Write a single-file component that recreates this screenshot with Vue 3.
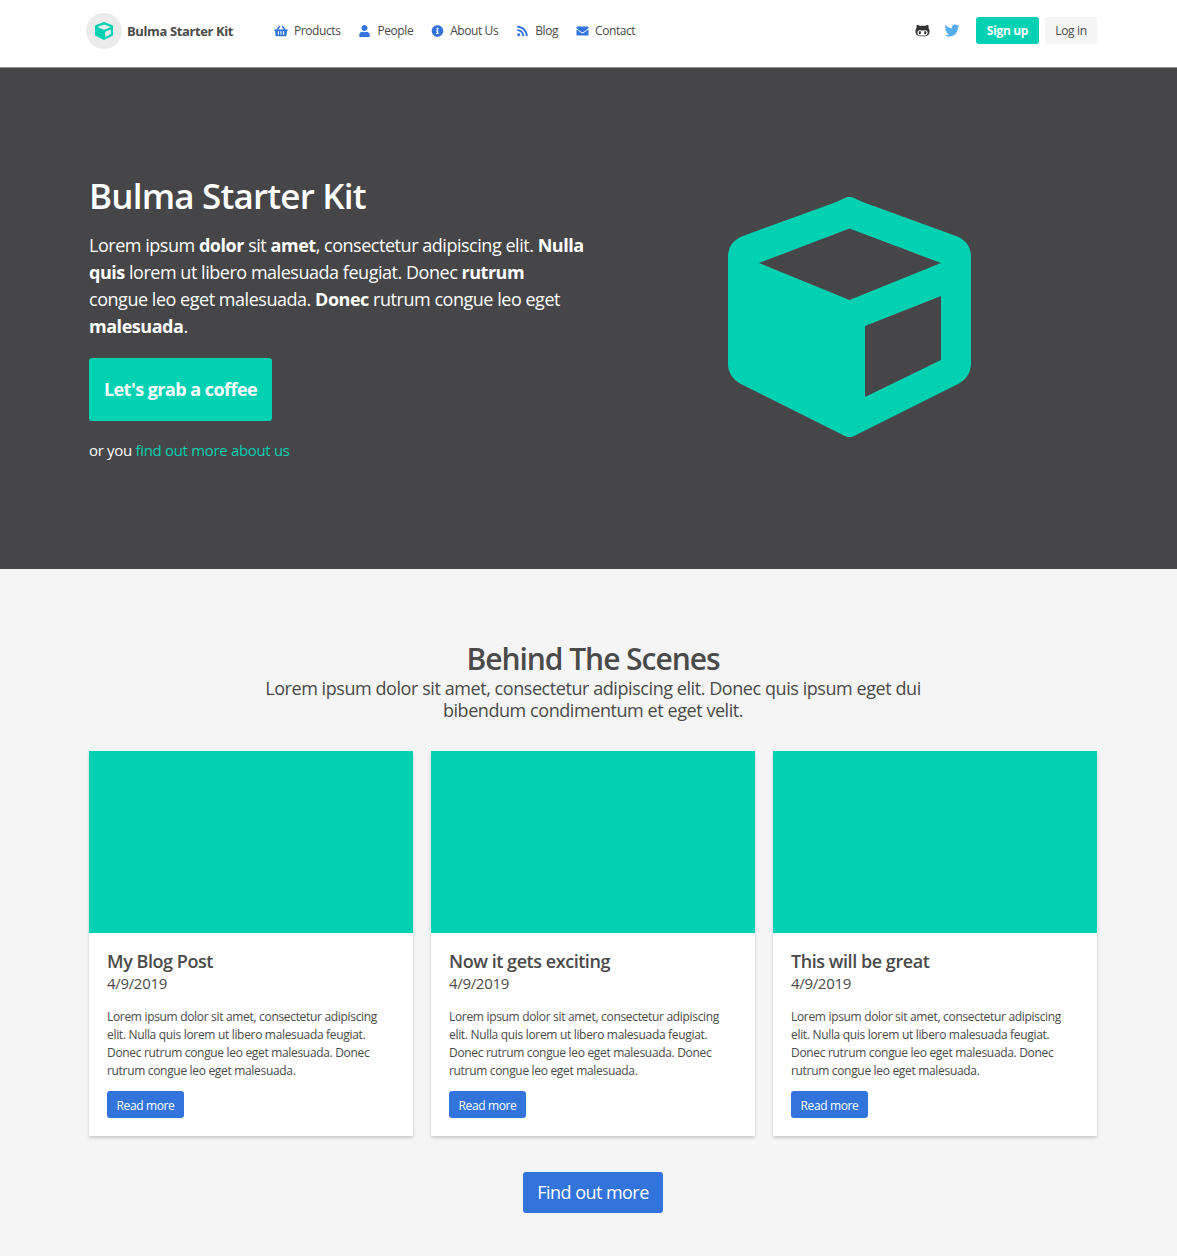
<template>
  <div class="page">
    <nav class="navbar">
      <a class="brand">
        <span class="brand-badge">
          <svg class="brand-cube" viewBox="0 0 243 240"><path fill-rule="evenodd" :d="cubePath" /></svg>
        </span>
        <span class="brand-name">Bulma Starter Kit</span>
      </a>
      <div class="nav-links">
        <a v-for="l in links" :key="l.label" class="nav-link">
          <svg class="nav-icon" :viewBox="l.box"><path :d="l.d" /></svg>
          <span>{{ l.label }}</span>
        </a>
      </div>
      <div class="nav-end">
        <svg class="social github" viewBox="0 0 480 512"><path :d="icons.github" /></svg>
        <svg class="social twitter" viewBox="0 0 512 512"><path :d="icons.twitter" /></svg>
        <a class="btn-signup">Sign up</a>
        <a class="btn-login">Log in</a>
      </div>
    </nav>

    <section class="hero">
      <div class="hero-text">
        <h1>Bulma Starter Kit</h1>
        <p class="hero-copy">
          Lorem ipsum <strong>dolor</strong> sit <strong>amet</strong>, consectetur adipiscing elit.
          <strong>Nulla quis</strong> lorem ut libero malesuada feugiat. Donec <strong>rutrum</strong>
          congue leo eget malesuada. <strong>Donec</strong> rutrum congue leo eget
          <strong>malesuada</strong>.
        </p>
        <a class="btn-coffee">Let's grab a coffee</a>
        <p class="hero-more">or you <a>find out more about us</a></p>
      </div>
      <div class="hero-art">
        <svg class="hero-cube" viewBox="0 0 243 240"><path fill-rule="evenodd" :d="cubePath" /></svg>
      </div>
    </section>

    <section class="scenes">
      <h2>Behind The Scenes</h2>
      <p class="scenes-sub">
        Lorem ipsum dolor sit amet, consectetur adipiscing elit. Donec quis ipsum eget dui bibendum condimentum et eget velit.
      </p>
      <div class="cards">
        <article v-for="p in posts" :key="p" class="card">
          <div class="card-image"></div>
          <div class="card-body">
            <h3>{{ p }}</h3>
            <div class="card-date">4/9/2019</div>
            <p class="card-text">
              Lorem ipsum dolor sit amet, consectetur adipiscing elit. Nulla quis lorem ut libero malesuada feugiat. Donec rutrum congue leo eget malesuada. Donec rutrum congue leo eget malesuada.
            </p>
            <a class="btn-read">Read more</a>
          </div>
        </article>
      </div>
      <div class="more-row">
        <a class="btn-more">Find out more</a>
      </div>
    </section>
  </div>
</template>

<script setup>
const cubePath =
  'M107 5.5C115 2 118 0 121.5 0S128 2 136 5.5L228 39Q243 45 243 60V166Q243 180 230 187L135 234.5C128 238 125 240 121.5 240S115 238 108 234.5L13 187Q0 180 0 166V60Q0 45 15 39Z' +
  'M31 66L121.5 103L213 66L121.5 31.5Z' +
  'M137 129V200L213 163V99Z'

const icons = {
  basket: 'M576 216v16c0 13.255-10.745 24-24 24h-8l-26.113 182.788C514.509 462.435 494.257 480 470.37 480H105.63c-23.887 0-44.139-17.565-47.518-41.212L32 256h-8c-13.255 0-24-10.745-24-24v-16c0-13.255 10.745-24 24-24h67.341l106.78-146.821c10.395-14.292 30.407-17.453 44.701-7.058 14.293 10.395 17.453 30.408 7.058 44.701L170.477 192h235.046L326.12 82.821c-10.395-14.292-7.234-34.306 7.059-44.701 14.291-10.395 34.306-7.235 44.701 7.058L484.659 192H552c13.255 0 24 10.745 24 24zM312 392V280c0-13.255-10.745-24-24-24s-24 10.745-24 24v112c0 13.255 10.745 24 24 24s24-10.745 24-24zm112 0V280c0-13.255-10.745-24-24-24s-24 10.745-24 24v112c0 13.255 10.745 24 24 24s24-10.745 24-24zm-224 0V280c0-13.255-10.745-24-24-24s-24 10.745-24 24v112c0 13.255 10.745 24 24 24s24-10.745 24-24z',
  user: 'M224 256c70.7 0 128-57.3 128-128S294.7 0 224 0 96 57.3 96 128s57.3 128 128 128zm89.6 32h-16.7c-22.2 10.2-46.9 16-72.9 16s-50.6-5.8-72.9-16h-16.7C60.2 288 0 348.2 0 422.4V464c0 26.5 21.5 48 48 48h352c26.5 0 48-21.5 48-48v-41.6c0-74.2-60.2-134.4-134.4-134.4z',
  info: 'M256 8C119.043 8 8 119.083 8 256c0 136.997 111.043 248 248 248s248-111.003 248-248C504 119.083 392.957 8 256 8zm0 110c23.196 0 42 18.804 42 42s-18.804 42-42 42-42-18.804-42-42 18.804-42 42-42zm56 254c0 6.627-5.373 12-12 12h-88c-6.627 0-12-5.373-12-12v-24c0-6.627 5.373-12 12-12h12v-64h-12c-6.627 0-12-5.373-12-12v-24c0-6.627 5.373-12 12-12h64c6.627 0 12 5.373 12 12v100h12c6.627 0 12 5.373 12 12v24z',
  rss: 'M128.081 415.959c0 35.369-28.672 64.041-64.041 64.041S0 451.328 0 415.959s28.672-64.041 64.041-64.041 64.04 28.673 64.04 64.041zm175.66 47.25c-8.354-154.6-132.185-278.587-286.95-286.95C7.656 175.765 0 183.105 0 192.253v48.069c0 8.415 6.49 15.472 14.887 16.018 111.832 7.284 201.473 96.702 208.772 208.772.547 8.397 7.604 14.887 16.018 14.887h48.069c9.149.001 16.489-7.655 15.995-16.79zm144.249.288C439.596 229.677 251.465 40.445 16.503 32.01 7.473 31.686 0 38.981 0 48.016v48.068c0 8.625 6.835 15.645 15.453 15.999 191.179 7.839 344.627 161.316 352.465 352.465.353 8.618 7.373 15.453 15.999 15.453h48.068c9.034-.001 16.329-7.474 16.005-16.504z',
  envelope: 'M502.3 190.8c3.9-3.1 9.7-.2 9.7 4.7V400c0 26.5-21.5 48-48 48H48c-26.5 0-48-21.5-48-48V195.6c0-5 5.7-7.8 9.7-4.7 22.4 17.4 52.1 39.5 154.1 113.6 21.1 15.4 56.7 47.8 92.2 47.6 35.7.3 72-32.8 92.3-47.6 102-74.1 131.6-96.3 154-113.7zM256 320c23.2.4 56.6-29.2 73.4-41.4 132.7-96.3 142.8-104.7 173.4-128.7 5.8-4.5 9.2-11.5 9.2-18.9v-19c0-26.5-21.5-48-48-48H48C21.5 64 0 85.5 0 112v19c0 7.4 3.4 14.3 9.2 18.9 30.6 23.9 40.7 32.4 173.4 128.7 16.8 12.2 50.2 41.8 73.4 41.4z',
  github: 'M186.1 328.7c0 20.9-10.9 55.1-36.7 55.1s-36.7-34.2-36.7-55.1 10.9-55.1 36.7-55.1 36.7 34.2 36.7 55.1zM480 278.2c0 31.9-3.2 65.7-17.5 95-37.9 76.6-142.1 74.8-216.7 74.8-75.8 0-186.2 2.7-225.6-74.8-14.6-29-20.2-63.1-20.2-95 0-41.9 13.9-81.5 41.5-113.6-5.2-15.8-7.7-32.4-7.7-48.8 0-21.5 4.9-32.3 14.6-51.8 45.3 0 74.3 9 108.8 36 29-6.9 58.8-10 88.7-10 27 0 54.2 2.9 80.4 9.2 34-26.7 63-35.2 107.8-35.2 9.8 19.5 14.6 30.3 14.6 51.8 0 16.4-2.6 32.7-7.7 48.2 27.5 32.4 39 72.3 39 114.2zm-64.3 50.5c0-43.9-26.7-82.6-73.5-82.6-18.9 0-37 3.4-56 6-14.9 2.3-29.8 3.2-45.1 3.2-15.2 0-30.1-.9-45.1-3.2-18.7-2.6-37-6-56-6-46.8 0-73.5 38.7-73.5 82.6 0 87.8 80.4 101.3 150.4 101.3h48.2c70.3 0 150.6-13.4 150.6-101.3zm-82.6-55.1c-25.8 0-36.7 34.2-36.7 55.1s10.9 55.1 36.7 55.1 36.7-34.2 36.7-55.1-10.9-55.1-36.7-55.1z',
  twitter: 'M459.37 151.716c.325 4.548.325 9.097.325 13.645 0 138.72-105.583 298.558-298.558 298.558-59.452 0-114.68-17.219-161.137-47.106 8.447.974 16.568 1.299 25.34 1.299 49.055 0 94.213-16.568 130.274-44.832-46.132-.975-84.792-31.188-98.112-72.772 6.498.974 12.995 1.624 19.818 1.624 9.421 0 18.843-1.3 27.614-3.573-48.081-9.747-84.143-51.98-84.143-102.985v-1.299c13.969 7.797 30.214 12.67 47.431 13.319-28.264-18.843-46.781-51.005-46.781-87.391 0-19.492 5.197-37.36 14.294-52.954 51.655 63.675 129.3 105.258 216.365 109.807-1.624-7.797-2.599-15.918-2.599-24.04 0-57.828 46.782-104.934 104.934-104.934 30.213 0 57.502 12.67 76.67 33.137 23.715-4.548 46.456-13.32 66.599-25.34-7.798 24.366-24.366 44.833-46.132 57.827 21.117-2.273 41.584-8.122 60.426-16.243-14.292 20.791-32.161 39.308-52.628 54.253z',
}

const links = [
  { label: 'Products', d: icons.basket, box: '0 0 576 512' },
  { label: 'People', d: icons.user, box: '0 0 448 512' },
  { label: 'About Us', d: icons.info, box: '0 0 512 512' },
  { label: 'Blog', d: icons.rss, box: '0 0 448 512' },
  { label: 'Contact', d: icons.envelope, box: '0 0 512 512' },
]

const posts = ['My Blog Post', 'Now it gets exciting', 'This will be great']
</script>

<style>
body { margin: 0; background: #f5f5f5; }
</style>

<style scoped>
.page {
  font-family: "Open Sans", "Noto Sans", sans-serif;
  color: #4a4a4a;
  letter-spacing: -0.02em;
}
a { cursor: pointer; }

.navbar {
  display: flex; align-items: center;
  height: 61px; padding: 0 80px 6px 86px;
  background: #fff;
  border-bottom: 1px solid #8f8f90;
}
.brand { display: flex; align-items: center; gap: 5px; width: 188px; }
.brand-badge {
  display: flex; align-items: center; justify-content: center;
  width: 36px; height: 36px; border-radius: 50%; background: #ebebeb;
}
.brand-cube { width: 18px; height: 18px; fill: #00d1b2; }
.brand-name { font-size: 13px; font-weight: 700; color: #4a4a4a; letter-spacing: -0.03em; }
.nav-links { display: flex; align-items: center; gap: 18px; }
.nav-link { display: flex; align-items: center; gap: 6px; font-size: 12px; color: #4a4a4a; letter-spacing: -0.035em; }
.nav-icon { width: 13px; height: 12px; fill: #3273dc; }
.nav-link:first-child .nav-icon { width: 14px; }
.nav-end { display: flex; align-items: center; margin-left: auto; }
.social { height: 15px; }
.github { width: 15px; fill: #333; margin-right: 14px; }
.twitter { width: 16px; fill: #55acee; margin-right: 16px; }
.btn-signup, .btn-login {
  display: flex; align-items: center; justify-content: center;
  height: 27px; border-radius: 3px; font-size: 12px;
}
.btn-signup { width: 63px; background: #00d1b2; color: #fff; font-weight: 700; margin-right: 6px; }
.btn-login { width: 52px; background: #f5f5f5; color: #4a4a4a; }

.hero {
  display: grid; grid-template-columns: 504px 504px; align-items: center;
  height: 501px; padding: 0 80px 0 89px;
  background: #464648; color: #fff;
}
.hero-text { padding-bottom: 3px; }
.hero-text h1 { margin: 0 0 14px; font-size: 35px; line-height: 45px; font-weight: 600; letter-spacing: -0.023em; }
.hero-copy { width: 496px; margin: 0 0 18px; font-size: 18px; line-height: 27px; letter-spacing: -0.026em; }
.hero-copy strong { font-weight: 700; }
.btn-coffee {
  display: inline-flex; align-items: center; justify-content: center;
  width: 183px; height: 63px; padding-bottom: 2px; box-sizing: border-box; border-radius: 3px;
  background: #00d1b2; color: #fff; font-size: 18px; font-weight: 700; letter-spacing: -0.03em;
}
.hero-more { margin: 18px 0 0; font-size: 15px; line-height: 22px; }
.hero-more a { color: #00d1b2; }
.hero-art { display: flex; justify-content: center; padding: 0 0 3px 8px; }
.hero-cube { width: 243px; height: 240px; fill: #00d1b2; }

.scenes { padding: 72px 80px 43px 89px; background: #f5f5f5; }
.scenes h2 { margin: 0; text-align: center; font-size: 30px; line-height: 36px; font-weight: 600; letter-spacing: -0.035em; }
.scenes-sub { width: 680px; margin: 0 auto 30px; text-align: center; font-size: 18px; line-height: 22px; letter-spacing: -0.024em; }
.cards { display: grid; grid-template-columns: repeat(3, 324px); gap: 18px; }
.card { background: #fff; box-shadow: 0 2px 3px rgba(10, 10, 10, 0.18); }
.card-image { height: 182px; background: #00d1b2; }
.card-body { padding: 17px 18px 18px; }
.card-body h3 { margin: 0; font-size: 18px; line-height: 22px; font-weight: 600; letter-spacing: -0.025em; }
.card-date { font-size: 15px; line-height: 22px; }
.card-text { margin: 14px 0 11px; font-size: 12px; line-height: 18px; }
.btn-read {
  display: inline-flex; align-items: center; justify-content: center;
  width: 77px; height: 27px; padding-top: 1px; box-sizing: border-box; border-radius: 3px;
  background: #3273dc; color: #fff; font-size: 12px; letter-spacing: -0.03em;
}
.more-row { display: flex; justify-content: center; margin-top: 36px; }
.btn-more {
  display: flex; align-items: center; justify-content: center;
  width: 140px; height: 41px; padding-bottom: 2px; box-sizing: border-box; border-radius: 3px;
  background: #3273dc; color: #fff; font-size: 18px; letter-spacing: -0.03em;
}
</style>
